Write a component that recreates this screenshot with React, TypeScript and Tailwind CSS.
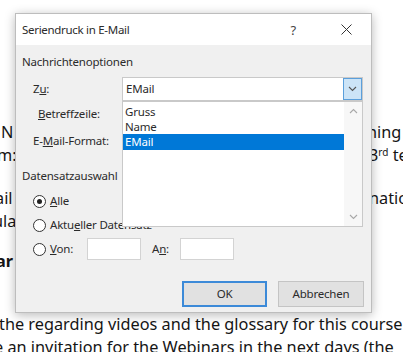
import React from 'react';

function Radio({ checked }: { checked?: boolean }) {
  return (
    <span className="w-[13px] h-[13px] shrink-0 rounded-full border border-[#333] bg-white flex items-center justify-center">
      {checked && <span className="w-[5px] h-[5px] rounded-full bg-[#222]" />}
    </span>
  );
}

function Chevron({ up, color }: { up?: boolean; color: string }) {
  return (
    <svg width="9" height="6" viewBox="0 0 9 6" fill="none">
      <path d={up ? 'M1 5 L4.5 1.5 L8 5' : 'M1 1 L4.5 4.5 L8 1'} stroke={color} strokeWidth="1.1" />
    </svg>
  );
}

export default function App() {
  return (
    <div className="relative w-[403px] h-[352px] overflow-hidden bg-white">
      {/* Document behind the dialog */}
      <div className="pt-[121px] text-[16.3px] leading-[23px] text-[#151515] font-['Noto_Sans',sans-serif] whitespace-nowrap">
        <div className="flex justify-between">
          <span className="pl-[1px]">N</span>
          <span className="w-[36px] overflow-hidden">hing t</span>
        </div>
        <div className="flex justify-between">
          <span className="-ml-[3px]">m:</span>
          <span className="w-[34px] overflow-hidden">3<sup className="text-[10px]">rd</sup> te</span>
        </div>
        <div className="flex justify-between mt-[20px]">
          <span className="-ml-[5px]">ail</span>
          <span className="w-[34px] overflow-hidden">natio</span>
        </div>
        <div className="flex">
          <span className="-ml-[7px]">ula</span>
        </div>
        <div className="flex mt-[17px]">
          <span className="-ml-[4px] font-bold">ar</span>
        </div>
        <div className="mt-[40px] -ml-[1px]">the regarding videos and the glossary for this course</div>
        <div className="-ml-[6px]">e an invitation for the Webinars in the next days (the</div>
      </div>

      {/* Dialog */}
      <div className="absolute left-[15px] top-[13px] w-[357px] h-[300px] flex flex-col bg-[#f0f0f0] border border-[#bdbdbd] shadow-[0_2px_10px_rgba(0,0,0,0.28)] text-[11.5px] tracking-[-0.2px] leading-[16px] text-[#2b2b2b] font-['Noto_Sans',sans-serif]">
        <div className="h-[31px] shrink-0 bg-white flex items-center pl-[6px] pr-[19px]">
          <span className="text-[11.5px] tracking-[-0.3px]">Seriendruck in E-Mail</span>
          <span className="ml-auto mr-[45px] text-[13px] text-[#444]">?</span>
          <svg width="11" height="11" viewBox="0 0 11 11">
            <path d="M0.5 0.5 L10.5 10.5 M10.5 0.5 L0.5 10.5" stroke="#333" strokeWidth="1" />
          </svg>
        </div>

        <div className="flex-1 px-[6px] pt-[9px]">
          <div>Nachrichtenoptionen</div>

          <div className="mt-[7px] flex flex-col">
            <div className="flex items-center h-[24px]">
              <span className="w-[100px] pl-[11px]">Z<u>u</u>:</span>
              <div className="w-[241px] h-[24px] bg-white border border-[#c9c9c9] flex items-center pl-[3px]">
                <span>EMail</span>
                <span className="ml-auto w-[19px] h-[22px] bg-[#cce4f7] border border-[#5b9fdb] flex items-center justify-center">
                  <Chevron color="#555" />
                </span>
              </div>
            </div>
            <div className="flex items-center h-[24px] mt-[1px]">
              <span className="w-[100px] pl-[16px]"><u>B</u>etreffzeile:</span>
            </div>
            <div className="flex items-center h-[24px] mt-[3px]">
              <span className="w-[100px] pl-[11px]">E-<u>M</u>ail-Format:</span>
            </div>
          </div>

          <div className="mt-[15px]">Datensatzauswahl</div>

          <div className="mt-[6px] flex flex-col gap-[2px] pl-[11px]">
            <div className="flex items-center h-[22px]">
              <Radio checked />
              <span className="ml-[4px]"><u>A</u>lle</span>
            </div>
            <div className="flex items-center h-[22px]">
              <Radio />
              <span className="ml-[4px]">Aktu<u>e</u>ller Datensatz</span>
            </div>
            <div className="flex items-center h-[22px]">
              <Radio />
              <span className="ml-[4px] w-[37px]"><u>V</u>on:</span>
              <span className="w-[54px] h-[22px] bg-white border border-[#d3d3d3]" />
              <span className="ml-[11px] w-[28px]">A<u>n</u>:</span>
              <span className="w-[54px] h-[22px] bg-white border border-[#d3d3d3]" />
            </div>
          </div>

          <div className="mt-[21px] flex justify-end gap-[11px] pr-[1px]">
            <button className="w-[85px] h-[26px] bg-[#e1e1e1] border-2 border-[#3c8ad8] text-[11.5px]">OK</button>
            <button className="w-[86px] h-[26px] bg-[#e1e1e1] border border-[#c4c4c4] text-[11.5px]">Abbrechen</button>
          </div>
        </div>

        {/* Open drop-down list */}
        <div className="absolute left-[106px] top-[87px] w-[241px] h-[126px] bg-white border border-[#c9c9c9] flex">
          <div className="flex-1 pt-[2px]">
            <div className="h-[15px] leading-[15px] pl-[2px]">Gruss</div>
            <div className="h-[15px] leading-[15px] pl-[2px]">Name</div>
            <div className="h-[16px] leading-[16px] pl-[2px] bg-[#0078d7] text-white">EMail</div>
          </div>
          <div className="w-[18px] bg-[#f7f7f7] flex flex-col justify-between items-center py-[6px]">
            <Chevron up color="#a8a8a8" />
            <Chevron color="#a8a8a8" />
          </div>
        </div>
      </div>
    </div>
  );
}
